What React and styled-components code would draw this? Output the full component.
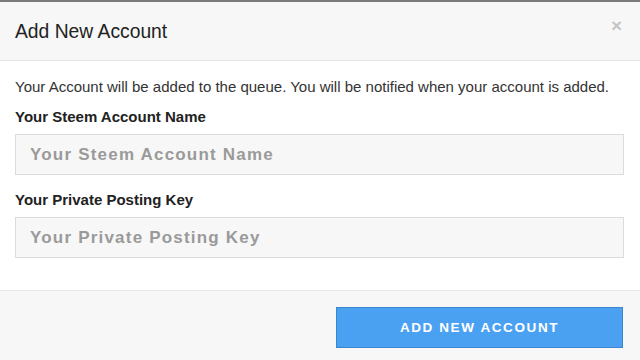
import React from "react";
import styled, { createGlobalStyle } from "styled-components";

const GlobalStyle = createGlobalStyle`
  html, body {
    margin: 0;
    padding: 0;
    background: #fff;
    font-family: "Liberation Sans", Arial, sans-serif;
    color: #333;
  }
  * {
    box-sizing: border-box;
  }
`;

const Modal = styled.div`
  width: 640px;
  height: 360px;
  display: flex;
  flex-direction: column;
  border-top: 2px solid #7b7b7b;
  background: #fff;
  overflow: hidden;
`;

const Header = styled.div`
  height: 59px;
  display: flex;
  align-items: center;
  justify-content: space-between;
  padding: 0 15px;
  background: #f7f7f7;
  border-bottom: 1px solid #e6e6e6;
`;

const Title = styled.h4`
  margin: 0;
  font-size: 19.3px;
  font-weight: normal;
  color: #222;
  line-height: 20px;
  padding-top: 1px;
`;

const Close = styled.button`
  border: 0;
  background: none;
  padding: 0;
  margin: -12px 3px 0 0;
  font-family: "Liberation Sans", Arial, sans-serif;
  font-size: 19px;
  font-weight: bold;
  line-height: 1;
  color: #000;
  opacity: 0.2;
  cursor: pointer;
`;

const Body = styled.div`
  flex: 1;
  padding: 16px 15px 0;
`;

const Intro = styled.p`
  margin: 0 0 10px;
  font-size: 15px;
  line-height: 20px;
  color: #333;
`;

const Field = styled.div`
  margin-bottom: 15px;
`;

const Label = styled.label`
  display: block;
  margin-bottom: 7px;
  font-size: 15px;
  line-height: 20px;
  font-weight: bold;
  color: #222;
`;

const Input = styled.input`
  display: block;
  width: 609px;
  height: 41px;
  padding: 0 14px;
  background: #f7f7f7;
  border: 1px solid #dcdcdc;
  font-family: "Liberation Sans", Arial, sans-serif;
  font-size: 17px;
  font-weight: bold;
  letter-spacing: 1.2px;
  color: #333;
  outline: none;

  &::placeholder {
    color: #9a9a9a;
  }
`;

const Footer = styled.div`
  height: 70px;
  display: flex;
  justify-content: flex-end;
  align-items: flex-start;
  padding: 16px 17px 0 15px;
  background: #f7f7f7;
  border-top: 1px solid #e6e6e6;
`;

const Button = styled.button`
  width: 287px;
  height: 41px;
  background: #4ba1f1;
  border: 1px solid #3b86cc;
  color: #fff;
  font-family: "Liberation Sans", Arial, sans-serif;
  font-size: 13.5px;
  font-weight: bold;
  letter-spacing: 1.6px;
  text-transform: uppercase;
  cursor: pointer;
`;

const fields = [
  { id: "steem-name", label: "Your Steem Account Name" },
  { id: "posting-key", label: "Your Private Posting Key" },
];

const App = () => {
  return (
    <>
      <GlobalStyle />
      <Modal>
        <Header>
          <Title>Add New Account</Title>
          <Close aria-label="Close">×</Close>
        </Header>
        <Body>
          <Intro>
            Your Account will be added to the queue. You will be notified when your account is added.
          </Intro>
          {fields.map((f) => (
            <Field key={f.id}>
              <Label htmlFor={f.id}>{f.label}</Label>
              <Input id={f.id} placeholder={f.label} />
            </Field>
          ))}
        </Body>
        <Footer>
          <Button>Add New Account</Button>
        </Footer>
      </Modal>
    </>
  );
};

export default App;
